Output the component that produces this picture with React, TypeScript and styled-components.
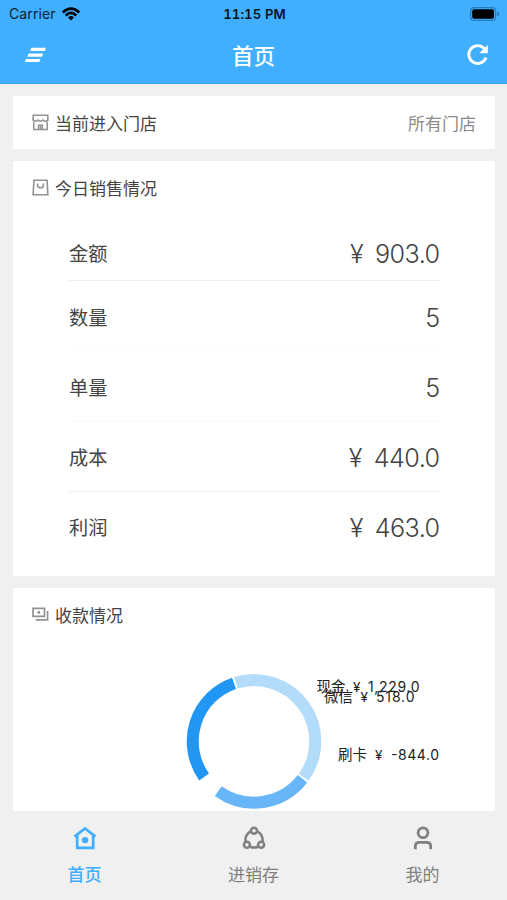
import React from "react";
import styled, { createGlobalStyle } from "styled-components";

const GlobalStyle = createGlobalStyle`
  * { box-sizing: border-box; }
  body {
    margin: 0;
    background: #f0f0f0;
    font-family: Inter, "Noto Sans CJK SC", sans-serif;
    color: #444;
  }
`;

const Screen = styled.div`
  width: 507px;
  height: 900px;
  display: flex;
  flex-direction: column;
  overflow: hidden;
  background: #f0f0f0;
`;

const Header = styled.header`
  height: 84px;
  flex: none;
  background: #40afff;
  border-bottom: 1px solid #3ba3ee;
`;

const StatusBar = styled.div`
  height: 27px;
  padding: 0 7px 0 9px;
  display: grid;
  grid-template-columns: 1fr auto 1fr;
  align-items: center;
  color: #0c2233;
  font-size: 14px;
  line-height: 26px;
`;

const Carrier = styled.div`
  display: flex;
  align-items: center;
  gap: 6px;
  letter-spacing: 0.1px;
`;

const Clock = styled.div`
  font-weight: 600;
  font-size: 13.2px;
  font-feature-settings: "tnum";
  letter-spacing: 0.1px;
  color: #061420;
  padding-top: 1px;
`;

const Battery = styled.div`
  display: flex;
  justify-content: flex-end;
`;

const TitleBar = styled.div`
  height: 56px;
  padding: 0 18px 0 24px;
  display: grid;
  grid-template-columns: 1fr auto 1fr;
  align-items: center;
  color: #fff;
`;

const Title = styled.h1`
  margin: 0 0 0 -6px;
  padding-top: 1px;
  font-size: 21.5px;
  line-height: 30px;
  font-weight: 500;
`;

const HeaderIcon = styled.div<{ $end?: boolean }>`
  display: flex;
  justify-content: ${(p) => (p.$end ? "flex-end" : "flex-start")};
`;

const Content = styled.main`
  flex: 1;
  min-height: 0;
  overflow: hidden;
  padding: 12px 12.5px 0 13px;
  display: flex;
  flex-direction: column;
  gap: 12px;
`;

const Card = styled.section<{ $height: number }>`
  height: ${(p) => p.$height}px;
  flex: none;
  background: #fff;
`;

const CardHeader = styled.div`
  height: 53px;
  padding: 0 18.5px;
  display: flex;
  align-items: center;
  font-size: 17px;
  line-height: 26px;
`;

const CardTitle = styled.div`
  margin-left: 6.5px;
  padding-top: 2px;
  flex: 1;
`;

const StoreName = styled.div`
  padding-top: 2px;
  color: #8a8a8a;
`;

const SalesList = styled.dl`
  margin: 0 55px 0 56px;
  padding-top: 11px;
`;

const SalesRow = styled.div<{ $height: number; $top: number; $line: string }>`
  height: ${(p) => p.$height}px;
  padding-top: ${(p) => p.$top}px;
  display: flex;
  align-items: flex-start;
  justify-content: space-between;
  border-bottom: 1px solid ${(p) => p.$line};
`;

const SalesLabel = styled.dt`
  font-size: 19.2px;
  line-height: 36px;
`;

const SalesValue = styled.dd`
  margin: 0;
  font-size: 25.2px;
  line-height: 36px;
  font-weight: 300;
  letter-spacing: -0.6px;
  display: flex;
  gap: 12px;
`;

const ChartArea = styled.svg`
  display: block;
  width: 482px;
  height: 171px;
  font-size: 14.5px;
  fill: #222;
`;

const TabBar = styled.nav`
  height: 89px;
  flex: none;
  display: grid;
  grid-template-columns: repeat(3, 1fr);
  background: #f0f0f0;
`;

const Tab = styled.a<{ $active?: boolean }>`
  display: flex;
  flex-direction: column;
  align-items: center;
  padding-top: 15px;
  gap: 12px;
  font-size: 17px;
  line-height: 24px;
  color: ${(p) => (p.$active ? "#40afff" : "#808080")};
  font-weight: ${(p) => (p.$active ? 500 : 400)};
`;

const sales = [
  { label: "金额", value: "903.0", money: true, height: 56, top: 11, line: "#efefef" },
  { label: "数量", value: "5", money: false, height: 70, top: 19, line: "#fafafa" },
  { label: "单量", value: "5", money: false, height: 71, top: 19, line: "#fafafa" },
  { label: "成本", value: "440.0", money: true, height: 70, top: 18, line: "#f0f0f0" },
  { label: "利润", value: "463.0", money: true, height: 70, top: 18, line: "transparent" },
];

const slices = [
  { from: -17.2, to: 125.9, color: "#b2dcfa" },
  { from: 127.7, to: 215.7, color: "#68b6f7" },
  { from: 234.5, to: 341.0, color: "#2196f3" },
];

const payments = [
  { name: "现金", amount: "1,229.0", x: 303.5, y: 50.5, symbol: 36.5, number: 51.5, width: 51.5 },
  { name: "微信", amount: "518.0", x: 311, y: 60.5, symbol: 36.5, number: 52, width: 38.5 },
  { name: "刷卡", amount: "-844.0", x: 325, y: 119, symbol: 37, number: 53, width: 48 },
];

const CENTER = { x: 241, y: 100.3 };
const RADIUS = 61.3;

function arc(from: number, to: number) {
  const point = (deg: number) => {
    const a = (deg * Math.PI) / 180;
    return `${CENTER.x + RADIUS * Math.sin(a)} ${CENTER.y - RADIUS * Math.cos(a)}`;
  };
  return `M${point(from)}A${RADIUS} ${RADIUS} 0 0 1 ${point(to)}`;
}

const WifiIcon = () => (
  <svg width="18" height="14" viewBox="0 0 18 14" fill="none" stroke="#000" strokeWidth="2.7">
    <path d="M.8 5.4Q9-2.2 17.2 5.4" />
    <path d="M3.7 8.4Q9 3.4 14.3 8.4" />
    <path d="M6 10.4Q9 7.8 12 10.4L9 13.6Z" fill="#000" stroke="none" />
  </svg>
);

const BatteryIcon = () => (
  <svg width="30" height="14" viewBox="0 0 30 14">
    <rect x="0.6" y="0.6" width="25" height="12.8" rx="3.5" fill="none" stroke="#277bb8" strokeWidth="1.2" />
    <rect x="2.2" y="2.2" width="21.8" height="9.6" rx="2" fill="#000" />
    <path d="M27.2 4.8Q29.4 5.3 29.4 7T27.2 9.2Z" fill="#277bb8" />
  </svg>
);

const MenuIcon = () => (
  <svg width="24" height="18" viewBox="0 0 24 18" fill="#fff">
    <path d="M7.3 1.8H22L20.8 4.9H6.1ZM4.6 7.6H19.2L18 10.7H3.4ZM1.9 13H16.5L15.3 16.1H.7Z" />
  </svg>
);

const RefreshIcon = () => (
  <svg width="22" height="22" viewBox="0 0 22 22" fill="none">
    <path d="M17.6 4.9A8.9 8.9 0 1 0 19.1 13.6" stroke="#fff" strokeWidth="2.9" />
    <path d="M20.8 1V9.3H12.2Z" fill="#fff" />
  </svg>
);

const StoreIcon = () => (
  <svg width="17" height="17" viewBox="0 0 17 17" fill="none" stroke="#929292" strokeWidth="1.5">
    <path d="M1.2 7V1.2H15.8V7M1.8 7.5V15.6H15.2V7.5" />
    <path d="M1.2 4.5V5.8Q3.5 8.6 6 5.9Q8.5 8.6 11 5.9Q13.5 8.6 15.8 5.8V4.5" />
    <path d="M6.6 15.6V11.2H10.4V15.6M8.5 11V15.6" />
  </svg>
);

const BagIcon = () => (
  <svg width="17" height="17" viewBox="0 0 17 17" fill="none" stroke="#929292" strokeWidth="1.6">
    <path d="M2 1.2H15L15.9 15.8H1.1Z" />
    <path d="M5.6 4.5V6.1A2.9 2.9 0 0 0 11.4 6.1V4.5" />
  </svg>
);

const PaymentIcon = () => (
  <svg width="17" height="15" viewBox="0 0 17 15" fill="none" stroke="#929292" strokeWidth="1.7">
    <path d="M1 1.4H12.5V9.4H1ZM3.8 12.8H15.6V4" />
    <circle cx="6.8" cy="5.4" r="1.3" fill="#888" stroke="none" />
  </svg>
);

const HomeIcon = () => (
  <svg width="24" height="25" viewBox="0 0 24 25" fill="none" stroke="currentColor" strokeWidth="2.7">
    <path d="M1.5 10.6L12 2.5L22.5 10.6M4.2 8.8V21.9H20.2V8.8" />
    <circle cx="12.1" cy="14.1" r="3.2" fill="currentColor" stroke="none" />
  </svg>
);

const NetworkIcon = () => (
  <svg width="24" height="25" viewBox="0 0 24 25" fill="none" stroke="currentColor" strokeWidth="2.6">
    <circle cx="12" cy="4.8" r="3" />
    <circle cx="4.9" cy="18.8" r="3" />
    <circle cx="19.1" cy="18.8" r="3" />
    <path d="M9 5.2Q2.5 8.8 3.6 16M15 5.2Q21.5 8.8 20.4 16M8 20.8Q12 22.3 16 20.8" />
  </svg>
);

const PersonIcon = () => (
  <svg width="24" height="25" viewBox="0 0 24 25" fill="none" stroke="currentColor" strokeWidth="2.8">
    <circle cx="12" cy="6.8" r="4.9" />
    <path d="M4.3 23.2V20.4Q4.3 16.4 8.3 16.4H15.7Q19.7 16.4 19.7 20.4V23.2" />
  </svg>
);

export default function App() {
  return (
    <Screen>
      <GlobalStyle />
      <Header>
        <StatusBar>
          <Carrier>Carrier<WifiIcon /></Carrier>
          <Clock>11:15 PM</Clock>
          <Battery><BatteryIcon /></Battery>
        </StatusBar>
        <TitleBar>
          <HeaderIcon><MenuIcon /></HeaderIcon>
          <Title>首页</Title>
          <HeaderIcon $end><RefreshIcon /></HeaderIcon>
        </TitleBar>
      </Header>
      <Content>
        <Card $height={53}>
          <CardHeader>
            <StoreIcon />
            <CardTitle>当前进入门店</CardTitle>
            <StoreName>所有门店</StoreName>
          </CardHeader>
        </Card>
        <Card $height={415}>
          <CardHeader>
            <BagIcon />
            <CardTitle>今日销售情况</CardTitle>
          </CardHeader>
          <SalesList>
            {sales.map((row) => (
              <SalesRow key={row.label} $height={row.height} $top={row.top} $line={row.line}>
                <SalesLabel>{row.label}</SalesLabel>
                <SalesValue>
                  {row.money && <span>¥</span>}
                  <span>{row.value}</span>
                </SalesValue>
              </SalesRow>
            ))}
          </SalesList>
        </Card>
        <Card $height={224}>
          <CardHeader>
            <PaymentIcon />
            <CardTitle>收款情况</CardTitle>
          </CardHeader>
          <ChartArea viewBox="0 0 482 171">
            {slices.map((s) => (
              <path key={s.color} d={arc(s.from, s.to)} fill="none" stroke={s.color} strokeWidth="12" />
            ))}
            {payments.map((p) => (
              <g key={p.name}>
                <text x={p.x} y={p.y}>{p.name}</text>
                <text x={p.x + p.symbol} y={p.y} fontSize="13.5">¥</text>
                <text x={p.x + p.number} y={p.y} fontSize="14" textLength={p.width}>{p.amount}</text>
              </g>
            ))}
          </ChartArea>
        </Card>
      </Content>
      <TabBar>
        <Tab $active><HomeIcon />首页</Tab>
        <Tab><NetworkIcon />进销存</Tab>
        <Tab><PersonIcon />我的</Tab>
      </TabBar>
    </Screen>
  );
}
